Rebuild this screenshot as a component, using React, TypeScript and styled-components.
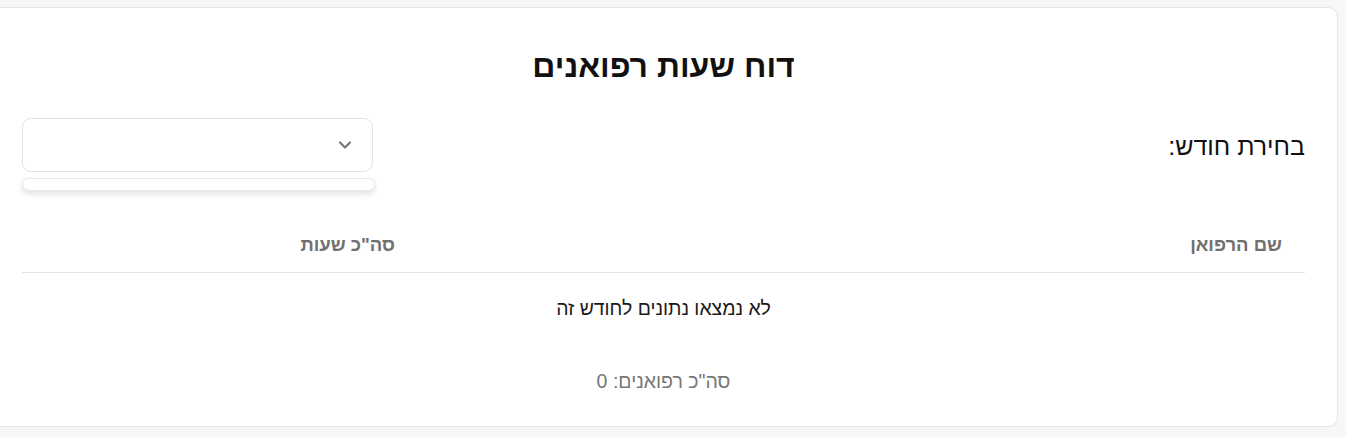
import React from "react";
import styled, { createGlobalStyle } from "styled-components";

const Global = createGlobalStyle`
  html, body { margin: 0; padding: 0; background: #f7f7f7; overflow: hidden; }
  body { font-family: "Liberation Sans", Arial, sans-serif; }
`;

const Page = styled.div`
  direction: rtl;
  padding: 7px 8px 0 0;
  width: 1346px;
  box-sizing: border-box;
  display: flex;
`;

const Card = styled.section`
  width: 1349px;
  flex: none;
  height: 420px;
  box-sizing: border-box;
  background: #fff;
  border: 1px solid #e6e6e6;
  border-radius: 10px;
  box-shadow: 0 1px 2px rgba(0,0,0,0.04);
  padding: 36px 32px 0 32px;
  display: flex;
  flex-direction: column;
`;

const Title = styled.h1`
  margin: 0;
  text-align: center;
  font-size: 32px;
  font-weight: 700;
  color: #111;
  line-height: 44px;
`;

const FilterRow = styled.div`
  margin-top: 30px;
  display: flex;
  justify-content: space-between;
  align-items: flex-start;
`;

const Label = styled.label`
  font-size: 25px;
  color: #111;
  line-height: 28px;
  margin-top: 14px;
`;

const SelectWrap = styled.div`
  width: 351px;
  display: flex;
  flex-direction: column;
  gap: 6px;
`;

const SelectBox = styled.div`
  height: 54px;
  box-sizing: border-box;
  border: 1px solid #e2e2e2;
  border-radius: 9px;
  background: #fff;
  display: flex;
  align-items: center;
  justify-content: flex-start;
  padding-right: 17px;
  color: #777;
`;

const Menu = styled.div`
  height: 13px;
  width: 353px;
  box-sizing: border-box;
  border: 1px solid #e8e8e8;
  border-radius: 7px;
  background: #fff;
  box-shadow: 0 3px 6px rgba(0,0,0,0.12);
  align-self: flex-end;
`;

const Table = styled.div`
  margin-top: 30px;
  display: flex;
  flex-direction: column;
`;

const HeadRow = styled.div`
  display: grid;
  grid-template-columns: 887px 1fr;
  border-bottom: 1px solid #e4e4e4;
  height: 52px;
  align-items: center;
  padding-bottom: 4px;
  box-sizing: border-box;
`;

const HeadCell = styled.div`
  font-size: 18.5px;
  font-weight: 700;
  color: #707070;
  padding-right: 23px;
`;

const Empty = styled.div`
  text-align: center;
  font-size: 19.4px;
  color: #1a1a1a;
  padding-top: 24px;
  line-height: 22px;
`;

const Footer = styled.div`
  text-align: center;
  font-size: 19.5px;
  color: #777;
  margin-top: 51px;
  line-height: 22px;
`;

export default function App() {
  return (
    <>
      <Global />
      <Page>
        <Card>
          <Title>דוח שעות רפואנים</Title>
          <FilterRow>
            <Label>בחירת חודש:</Label>
            <SelectWrap>
              <SelectBox>
                <svg width="20" height="20" viewBox="0 0 24 24" fill="none" stroke="#777" strokeWidth="2.6" strokeLinecap="round" strokeLinejoin="round">
                  <path d="M6 9l6 6 6-6" />
                </svg>
              </SelectBox>
              <Menu />
            </SelectWrap>
          </FilterRow>
          <Table>
            <HeadRow>
              <HeadCell>שם הרפואן</HeadCell>
              <HeadCell>סה"כ שעות</HeadCell>
            </HeadRow>
            <Empty>לא נמצאו נתונים לחודש זה</Empty>
          </Table>
          <Footer>סה"כ רפואנים: 0</Footer>
        </Card>
      </Page>
    </>
  );
}
